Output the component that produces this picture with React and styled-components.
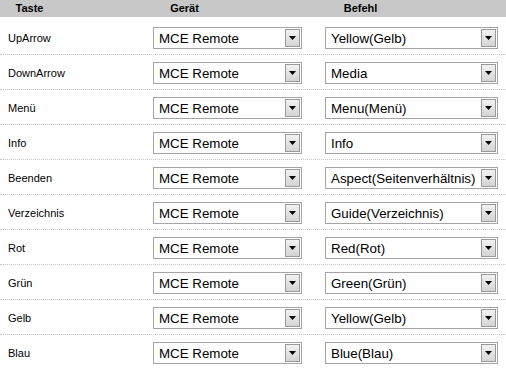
import styled, { createGlobalStyle } from "styled-components";

const GlobalStyle = createGlobalStyle`
  html, body {
    margin: 0;
    padding: 0;
    background: #fff;
  }
  body {
    font-family: "Liberation Sans", Arial, sans-serif;
  }
`;

const rows = [
    ["UpArrow", "Yellow(Gelb)"],
    ["DownArrow", "Media"],
    ["Menü", "Menu(Menü)"],
    ["Info", "Info"],
    ["Beenden", "Aspect(Seitenverhältnis)"],
    ["Verzeichnis", "Guide(Verzeichnis)"],
    ["Rot", "Red(Rot)"],
    ["Grün", "Green(Grün)"],
    ["Gelb", "Yellow(Gelb)"],
    ["Blau", "Blue(Blau)"],
];

const Select = ({ value, width }) => (
    <SelectBox $width={width}>
        <span>{value}</span>
        <ArrowButton>
            <svg width="7" height="4" viewBox="0 0 7 4">
                <path d="M0 0H7L3.5 4Z" fill="#000" />
            </svg>
        </ArrowButton>
    </SelectBox>
);

const App = () => {
    return (<>
        <GlobalStyle />
        <Page>
            <Header>
                <HeadCell $width={59}>Taste</HeadCell>
                <HeadCell $width={251}>Gerät</HeadCell>
                <HeadCell $width={101}>Befehl</HeadCell>
            </Header>
            <Rows>
                {rows.map(([key, cmd], i) => (
                    <Row key={i} $last={i === rows.length - 1}>
                        <Label>{key}</Label>
                        <Select value="MCE Remote" width={149} />
                        <Select value={cmd} width={173} />
                    </Row>
                ))}
            </Rows>
        </Page>
    </>
    );
};

export default App;

const Page = styled.div`
    width: 506px;
    height: 369px;
    overflow: hidden;
`;

const Header = styled.div`
    display: flex;
    height: 17px;
    background: #c8c8c8;
`;

const HeadCell = styled.div`
    width: ${(p) => p.$width}px;
    text-align: center;
    font-size: 11px;
    font-weight: bold;
    line-height: 17px;
    color: #000;
`;

const Rows = styled.div`
    padding-top: 3px;
`;

const Row = styled.div`
    display: grid;
    grid-template-columns: 145px 149px 173px;
    column-gap: 0;
    align-items: center;
    padding: 7px 0 5px 8px;
    border-bottom: ${(p) => (p.$last ? "none" : "1px dotted #c4c4c4")};

    & > :nth-child(3) {
        margin-left: 23px;
    }
`;

const Label = styled.div`
    font-size: 11px;
    color: #000;
`;

const SelectBox = styled.div`
    box-sizing: border-box;
    width: ${(p) => p.$width}px;
    height: 22px;
    border: 1px solid #a5a5a5;
    background: #fff;
    display: flex;
    align-items: center;
    justify-content: space-between;
    padding: 1px 1px 1px 5px;
    font-size: 13.33px;
    color: #000;
    white-space: nowrap;
`;

const ArrowButton = styled.div`
    box-sizing: border-box;
    width: 15px;
    height: 18px;
    border: 1px solid #9a9a9a;
    background: linear-gradient(#f2f2f2, #d4d4d4);
    display: flex;
    align-items: center;
    justify-content: center;
    flex-shrink: 0;
`;
